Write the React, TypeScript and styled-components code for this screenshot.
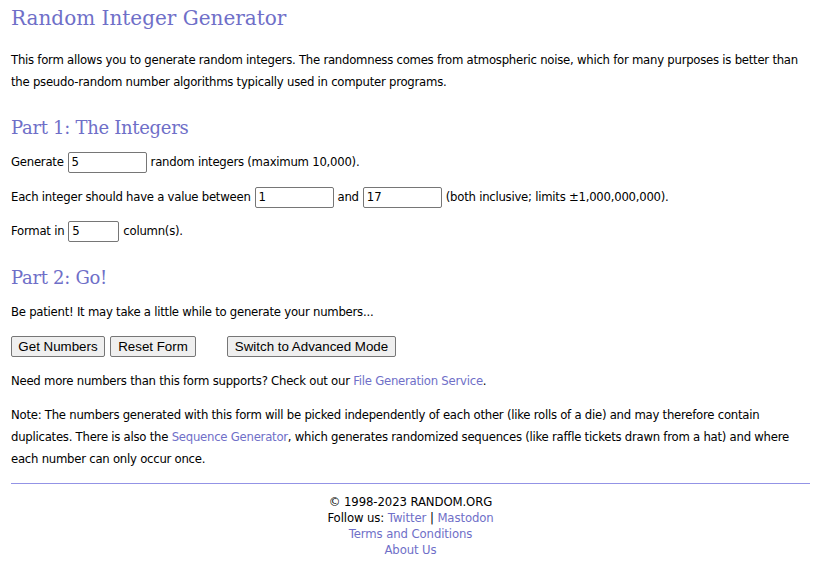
import React from 'react'
import styled, { createGlobalStyle } from 'styled-components'

const GlobalStyle = createGlobalStyle`
  body {
    margin: 0;
    background: #fff;
    color: #000;
    font-family: "DejaVu Sans", Verdana, sans-serif;
    font-size: 11.7px;
    letter-spacing: -0.25px;
  }
`

const LINK = '#6f6fc8'

const Page = styled.div`
  padding: 0 10px 0 11px;
`

const Title = styled.h1`
  margin: 4px 0 0;
  font-family: "DejaVu Serif", Georgia, serif;
  font-weight: normal;
  font-size: 20px;
  line-height: 28px;
  letter-spacing: 0;
  color: ${LINK};
`

const Heading = styled.h2<{ $top: number }>`
  margin: ${(p) => p.$top}px 0 0;
  font-family: "DejaVu Serif", Georgia, serif;
  font-weight: normal;
  font-size: 18px;
  line-height: 28px;
  letter-spacing: -0.3px;
  color: ${LINK};
`

const Text = styled.p<{ $top: number }>`
  margin: ${(p) => p.$top}px 0 0;
  line-height: 22px;
`

const Row = styled.div<{ $top: number }>`
  margin-top: ${(p) => p.$top}px;
  height: 24px;
  display: flex;
  align-items: center;
  white-space: pre;
`

const Field = styled.input<{ $w: number }>`
  box-sizing: border-box;
  width: ${(p) => p.$w}px;
  height: 21px;
  margin: 0 4px;
  padding: 1px 3px;
  border: 1px solid #767676;
  border-radius: 2px;
  font-family: "DejaVu Sans", Verdana, sans-serif;
  font-size: 11.7px;
  color: #000;
  background: #fff;
`

const Button = styled.button<{ $w: number; $gap?: number }>`
  box-sizing: border-box;
  width: ${(p) => p.$w}px;
  height: 21px;
  margin-left: ${(p) => p.$gap ?? 0}px;
  padding: 0;
  border: 1px solid #767676;
  border-radius: 2px;
  background: #efefef;
  font-family: "Liberation Sans", Arial, sans-serif;
  font-size: 13.33px;
  letter-spacing: 0;
  color: #000;
`

const Link = styled.a`
  color: ${LINK};
  text-decoration: none;
`

const Rule = styled.hr`
  margin: 13px 0 0;
  border: 0;
  border-top: 1px solid #9393e6;
`

const Footer = styled.footer`
  margin-top: 10px;
  text-align: center;
  line-height: 16px;
  letter-spacing: -0.1px;
`

export default function App() {
  return (
    <Page>
      <GlobalStyle />
      <Title>Random Integer Generator</Title>
      <Text $top={17}>
        This form allows you to generate random integers. The randomness comes from atmospheric
        noise, which for many purposes is better than the pseudo-random number algorithms
        typically used in computer programs.
      </Text>

      <Heading $top={21}>Part 1: The Integers</Heading>
      <Row $top={8}>
        Generate<Field $w={79} defaultValue="5" />random integers (maximum 10,000).
      </Row>
      <Row $top={11}>
        Each integer should have a value between<Field $w={79} defaultValue="1" />and
        <Field $w={79} defaultValue="17" />(both inclusive; limits ±1,000,000,000).
      </Row>
      <Row $top={10}>
        Format in<Field $w={51} defaultValue="5" />column(s).
      </Row>

      <Heading $top={21}>Part 2: Go!</Heading>
      <Text $top={9}>Be patient! It may take a little while to generate your numbers...</Text>
      <Row $top={11}>
        <Button $w={94}>Get Numbers</Button>
        <Button $w={86} $gap={5}>Reset Form</Button>
        <Button $w={169} $gap={31}>Switch to Advanced Mode</Button>
      </Row>
      <Text $top={12}>
        Need more numbers than this form supports? Check out our{' '}
        <Link href="#">File Generation Service</Link>.
      </Text>
      <Text $top={12}>
        Note: The numbers generated with this form will be picked independently of each other
        (like rolls of a die) and may therefore contain duplicates. There is also the{' '}
        <Link href="#">Sequence Generator</Link>, which generates randomized sequences (like
        raffle tickets drawn from a hat) and where each number can only occur once.
      </Text>

      <Rule />
      <Footer>
        <div>© 1998-2023 RANDOM.ORG</div>
        <div>
          Follow us: <Link href="#">Twitter</Link> | <Link href="#">Mastodon</Link>
        </div>
        <div>
          <Link href="#">Terms and Conditions</Link>
        </div>
        <div>
          <Link href="#">About Us</Link>
        </div>
      </Footer>
    </Page>
  )
}
